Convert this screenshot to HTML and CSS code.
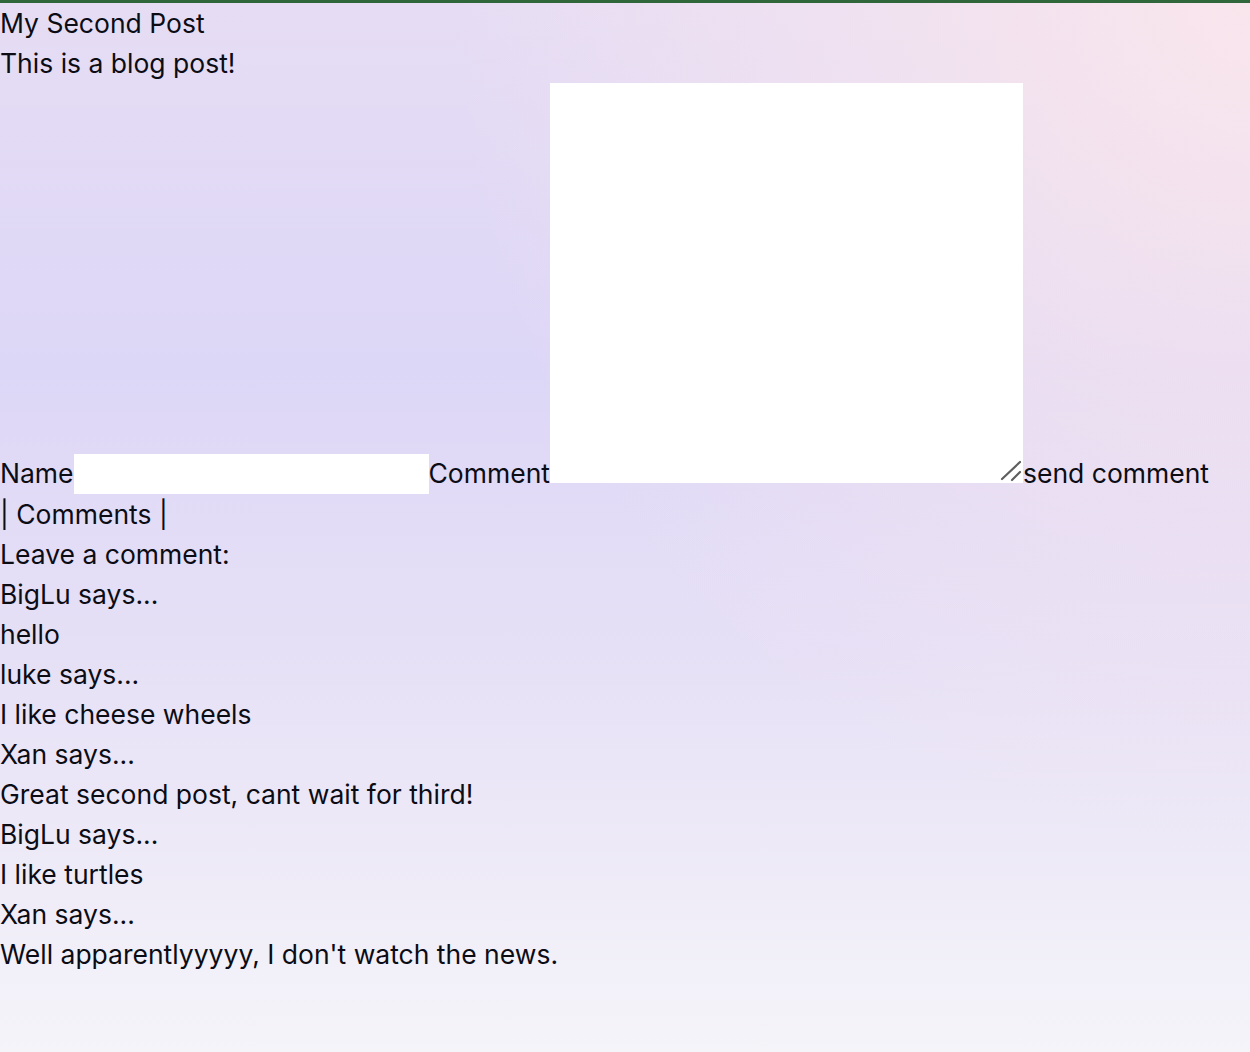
FILE: index.html
```html
<!DOCTYPE html>
<html>
<head>
<meta charset="utf-8">
<link rel="stylesheet" href="styles.css">
</head>
<body>
<div class="page">
  <div class="line">My Second Post</div>
  <div class="line">This is a blog post!</div>
  <form class="comment-form">
    <label class="lbl">Name</label><input class="name-input" type="text"><label class="lbl">Comment</label><span class="area-wrap"><textarea class="comment-area"></textarea><svg class="grip" width="24" height="24" viewBox="0 0 24 24"><line x1="3" y1="20" x2="21" y2="3" stroke="#5f5f5f" stroke-width="2.2" stroke-linecap="round"/><line x1="13" y1="21" x2="21" y2="13" stroke="#5f5f5f" stroke-width="2.2" stroke-linecap="round"/></svg></span><span class="send">send comment</span>
  </form>
  <div class="line">| Comments |</div>
  <div class="line">Leave a comment:</div>
  <div class="line">BigLu says...</div>
  <div class="line">hello</div>
  <div class="line">luke says...</div>
  <div class="line">I like cheese wheels</div>
  <div class="line">Xan says...</div>
  <div class="line">Great second post, cant wait for third!</div>
  <div class="line">BigLu says...</div>
  <div class="line">I like turtles</div>
  <div class="line">Xan says...</div>
  <div class="line">Well apparentlyyyyy, I don't watch the news.</div>
</div>
</body>
</html>
```
FILE: styles.css
```css
html, body {
  margin: 0;
  padding: 0;
  height: 100%;
}
body {
  border-top: 3px solid #2f673a;
  box-sizing: border-box;
  min-height: 1052px;
  font-family: Inter, "Noto Sans", sans-serif;
  font-size: 26.5px;
  line-height: 40px;
  color: #0c0c14;
  background:
    radial-gradient(ellipse 800px 850px at 100% 0%, rgba(250, 230, 236, 0.95), rgba(250, 230, 236, 0) 100%),
    linear-gradient(180deg, #e6ddf4 0%, #ddd7f7 35%, #e6e0f6 62%, #f5f4f9 100%);
}
.page {
  margin: 0;
}
.line {
  height: 40px;
  white-space: nowrap;
}
.comment-form {
  margin: 0;
  line-height: 40px;
  height: 411px;
  white-space: nowrap;
}
.name-input {
  font: inherit;
  width: 355px;
  height: 40px;
  box-sizing: border-box;
  border: none;
  padding: 0;
  margin: 0;
  background: #fff;
  vertical-align: -1px;
  outline: none;
}
.area-wrap {
  position: relative;
  display: inline-block;
  width: 473px;
  height: 400px;
}
.comment-area {
  display: block;
  font: inherit;
  width: 473px;
  height: 400px;
  box-sizing: border-box;
  border: none;
  padding: 0;
  margin: 0;
  background: #fff;
  resize: none;
  outline: none;
}
.grip {
  position: absolute;
  right: 0;
  bottom: 0;
}
```
